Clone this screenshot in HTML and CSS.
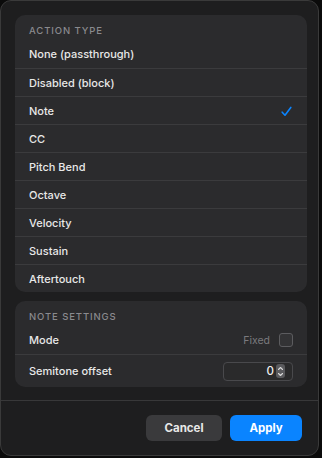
FILE: index.html
```html
<!DOCTYPE html>
<html>
<head>
<meta charset="utf-8">
<link rel="stylesheet" href="styles.css">
</head>
<body>
<div class="window">
  <div class="content">
    <section class="group">
      <div class="group-header">ACTION TYPE</div>
      <div class="row"><span>None (passthrough)</span></div>
      <div class="row"><span>Disabled (block)</span></div>
      <div class="row"><span>Note</span>
        <svg class="check" width="11" height="11" viewBox="0 0 11 11"><path d="M1.2 6.2 L4 9.2 L9.8 1.4" fill="none" stroke="#0a84ff" stroke-width="1.6" stroke-linecap="round" stroke-linejoin="round"/></svg>
      </div>
      <div class="row"><span>CC</span></div>
      <div class="row"><span>Pitch Bend</span></div>
      <div class="row"><span>Octave</span></div>
      <div class="row"><span>Velocity</span></div>
      <div class="row"><span>Sustain</span></div>
      <div class="row"><span>Aftertouch</span></div>
    </section>
    <section class="group">
      <div class="group-header">NOTE SETTINGS</div>
      <div class="row row-mode"><span>Mode</span>
        <label class="fixed"><span class="fixed-label">Fixed</span><span class="checkbox"></span></label>
      </div>
      <div class="row row-semi"><span>Semitone offset</span>
        <div class="stepper-field">
          <span class="value">0</span>
          <span class="stepper">
            <svg width="7" height="13" viewBox="0 0 7 13"><path d="M1.5 4.5 L3.5 2.5 L5.5 4.5 M1.5 8.5 L3.5 10.5 L5.5 8.5" fill="none" stroke="#d8d8d8" stroke-width="1.1" stroke-linecap="round" stroke-linejoin="round"/></svg>
          </span>
        </div>
      </div>
    </section>
  </div>
  <div class="footer">
    <button class="btn btn-cancel">Cancel</button>
    <button class="btn btn-apply">Apply</button>
  </div>
</div>
</body>
</html>
```

FILE: styles.css
```css
* { box-sizing: border-box; }
html, body { margin: 0; padding: 0; background: #0b0b0b; }
body {
  font-family: Inter, "Liberation Sans", sans-serif;
  color: #e6e6e6;
  width: 322px;
  height: 458px;
}
.window {
  width: 319px;
  height: 456px;
  border: 1px solid #3a3a3a;
  border-radius: 11px;
  background: #1e1e1f;
  display: flex;
  flex-direction: column;
  overflow: hidden;
}
.content {
  padding: 14px 11px 13px 14px;
  display: flex;
  flex-direction: column;
  gap: 9px;
  border-bottom: 1px solid #383839;
}
.group {
  background: #2b2b2d;
  border-radius: 10px;
  display: flex;
  flex-direction: column;
}
.group-header {
  height: 25px;
  padding: 10px 14px 0;
  font-size: 9.5px;
  letter-spacing: 0.9px;
  color: #8a8a8e;
  line-height: 11px;
  font-weight: 500;
}
.row {
  height: 28px;
  padding: 0 14px;
  display: flex;
  align-items: center;
  justify-content: space-between;
  font-size: 11px;
  font-weight: 500;
  color: #e8e8e8;
  border-top: 1px solid #3b3b3d;
}
.group-header + .row { border-top: none; }
.check { margin-right: 1px; margin-top: 1px; }
.row-semi { height: 33px; }
.fixed { display: flex; align-items: center; gap: 9px; }
.fixed-label { color: #7a7a7e; font-size: 10.5px; font-weight: 400; }
.checkbox {
  width: 14px; height: 14px;
  border: 1px solid #5c5c5f;
  border-radius: 3px;
  background: #333335;
}
.stepper-field {
  width: 70px; height: 19px;
  border: 1px solid #49494c;
  border-radius: 4px;
  background: #2a2a2b;
  display: flex;
  align-items: center;
  justify-content: flex-end;
  padding-right: 7px;
  gap: 2px;
}
.value { font-size: 11.5px; color: #f0f0f0; }
.stepper {
  width: 9px; height: 14px;
  background: #5a5a5d;
  border-radius: 3px;
  display: flex; align-items: center; justify-content: center;
}
.footer {
  flex: 1;
  display: flex;
  justify-content: flex-end;
  align-items: flex-start;
  gap: 8px;
  padding: 14px 16px 0 0;
}
.btn {
  height: 26px;
  border: none;
  border-radius: 6px;
  font-family: Inter, "Liberation Sans", sans-serif;
  font-size: 11.5px;
  font-weight: 700;
  color: #fff;
}
.btn-cancel { width: 76px; background: #3a3a3c; color: #e8e8e8; }
.btn-apply { width: 72px; background: #0a84ff; }
```
